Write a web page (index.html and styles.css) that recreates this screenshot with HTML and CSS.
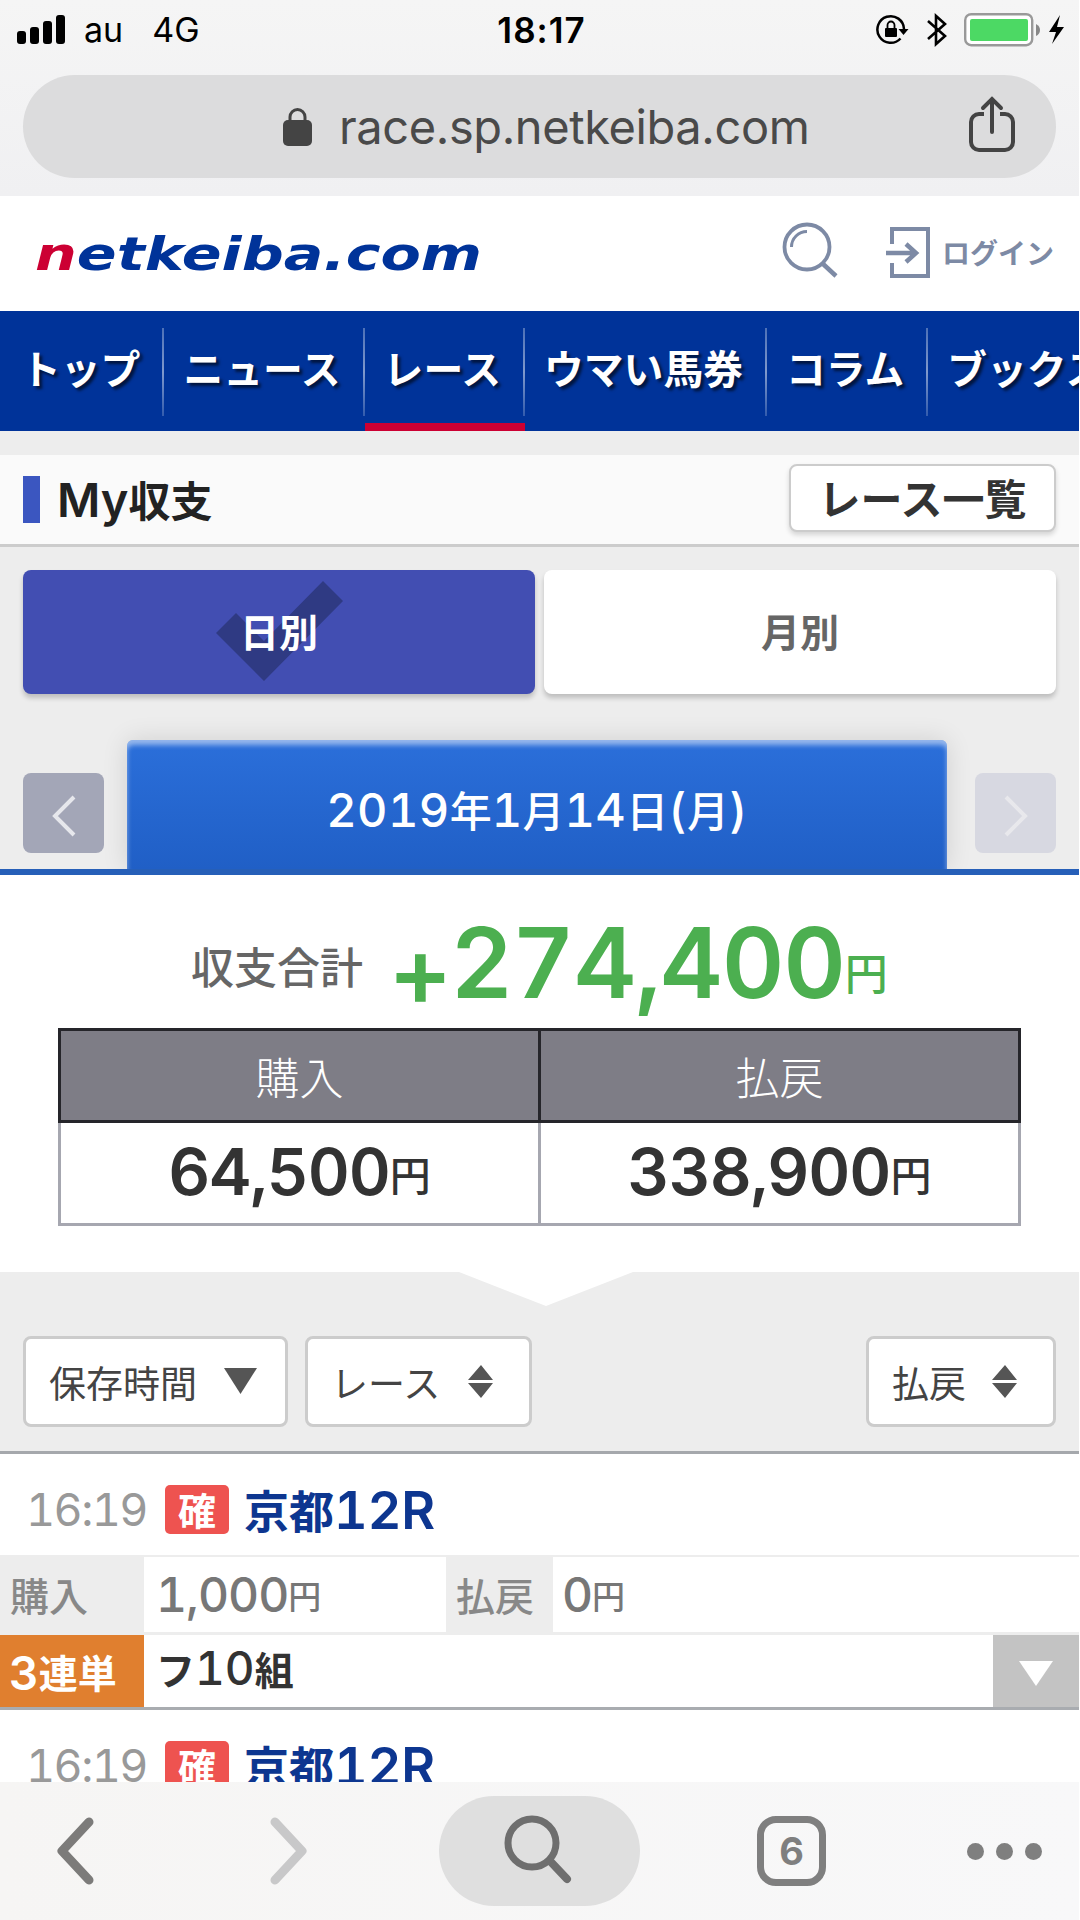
FILE: index.html
```html
<!DOCTYPE html>
<html lang="ja">
<head>
    <meta charset="UTF-8">
    <meta name="viewport" content="width=device-width, initial-scale=1.0">
    <title>My収支</title>
    <link rel="stylesheet" href="styles.css">
</head>
<body>
    <!-- Browser chrome (top) -->
    <div class="browser-top">
        <div class="status-bar">
            <div class="status-left">
                <svg class="signal" width="48" height="30" viewBox="0 0 48 30">
                    <rect x="0" y="16" width="9" height="13" rx="3"/>
                    <rect x="13" y="12" width="9" height="17" rx="3"/>
                    <rect x="26" y="6" width="9" height="23" rx="3"/>
                    <rect x="39" y="0" width="9" height="29" rx="3"/>
                </svg>
                <span class="carrier">au</span>
                <span>4G</span>
            </div>
            <div class="status-time">18:17</div>
            <div class="status-right">
                <svg width="33" height="32" viewBox="0 0 33 32">
                    <path d="M24.5 24.5A13.3 13.3 0 1 1 28 15" fill="none" stroke="#000" stroke-width="2.5"/>
                    <path d="M22.5 15h10l-5 6z"/>
                    <rect x="9" y="14" width="12" height="9" rx="1"/>
                    <path d="M11.5 14v-3a3.5 3.5 0 0 1 7 0v3" fill="none" stroke="#000" stroke-width="1.8"/>
                </svg>
                <svg class="bluetooth" width="22" height="34" viewBox="0 0 22 34">
                    <path d="M2 8l17 15-9 8V3l9 8L2 26" fill="none" stroke="#000" stroke-width="2.6"/>
                </svg>
                <svg width="102" height="34" viewBox="0 0 102 34">
                    <rect x="1.2" y="1.2" width="67" height="31" rx="6" fill="#fff" stroke="#999" stroke-width="2.4"/>
                    <rect x="6" y="6" width="58" height="22" rx="2" fill="#4cd964"/>
                    <path d="M72 11q4 2 4 6t-4 6z" fill="#888"/>
                    <path d="M96 2L85 19h7l-4 12 12-17h-7z"/>
                </svg>
            </div>
        </div>
        <div class="url-bar">
            <svg class="lock" width="29" height="38" viewBox="0 0 29 38">
                <rect x="0" y="12" width="29" height="26" rx="5" fill="#444"/>
                <path d="M7 13V9a7.5 7.5 0 0 1 15 0v4" fill="none" stroke="#444" stroke-width="3"/>
            </svg>
            <span class="url-text">race.sp.netkeiba.com</span>
            <svg class="share" width="46" height="58" viewBox="0 0 46 58" fill="none" stroke="#444" stroke-width="4">
                <path d="M15 18H10a8 8 0 0 0-8 8v20a8 8 0 0 0 8 8h26a8 8 0 0 0 8-8V26a8 8 0 0 0-8-8h-5"/>
                <path d="M23 36V3M14 12l9-9 9 9" stroke-linecap="round"/>
            </svg>
        </div>
    </div>

    <div class="page">
        <header class="site-header">
            <svg class="logo" width="460" height="60" viewBox="0 0 460 60">
                <text x="1" y="46" textLength="447" lengthAdjust="spacingAndGlyphs"><tspan class="logo-n">n</tspan>etkeiba.com</text>
            </svg>
            <div class="header-links">
                <svg class="search-icon" width="56" height="56" viewBox="0 0 56 56" fill="none" stroke="#7d8aa5" stroke-width="3.8">
                    <circle cx="25" cy="25" r="22.5"/>
                    <path d="M40 41l14 13" stroke-width="4.5"/>
                    <path d="M9.5 25A15.5 15.5 0 0 1 25 9.5" stroke-width="3"/>
                </svg>
                <svg class="login-icon" width="45" height="52" viewBox="0 0 45 52" fill="none" stroke="#7d8aa5" stroke-width="4">
                    <path d="M6 17V2h36v47H6V36"/>
                    <path d="M0 26h30M20 17l10 9-10 9" stroke-width="4.5"/>
                </svg>
                <span class="login-text">ログイン</span>
            </div>
        </header>

        <nav class="global-nav">
            <a>トップ</a>
            <a>ニュース</a>
            <a class="current">レース</a>
            <a>ウマい馬券</a>
            <a>コラム</a>
            <a>ブックス</a>
        </nav>

        <div class="title-bar">
            <h1><span class="latin">My</span>収支</h1>
            <a class="race-list-btn">レース一覧</a>
        </div>

        <div class="balance-head">
            <div class="period-tabs">
                <div class="period active">
                    <svg class="check" width="127" height="100" viewBox="0 0 127 100">
                        <path d="M107 0l20 20-79 80L0 52l20-20 28 28z" fill="#2f3a83"/>
                    </svg>
                    <span>日別</span>
                </div>
                <div class="period"><span>月別</span></div>
            </div>
            <div class="date-row">
                <div class="arrow prev">
                    <svg width="24" height="44" viewBox="0 0 24 44"><path d="M22 3L3 22l19 19" fill="none" stroke="#e6e7ec" stroke-width="4"/></svg>
                </div>
                <div class="date"><b>2019</b>年<b>1</b>月<b>14</b>日<b>(</b>月<b>)</b></div>
                <div class="arrow next">
                    <svg width="24" height="44" viewBox="0 0 24 44"><path d="M2 3l19 19L2 41" fill="none" stroke="#e8e8ec" stroke-width="4"/></svg>
                </div>
            </div>
        </div>

        <div class="summary">
            <div class="total">
                <span class="total-label">収支合計</span><span class="total-value"><span class="plus">+</span>274,400</span><span class="total-yen">円</span>
            </div>
            <table class="summary-table">
                <tr><th>購入</th><th>払戻</th></tr>
                <tr><td><b>64,500</b>円</td><td><b>338,900</b>円</td></tr>
            </table>
        </div>

        <div class="sort-area">
            <svg class="notch" width="174" height="35" viewBox="0 0 174 35"><path d="M0 0h174L87 34z" fill="#fff"/></svg>
            <div class="sort-row">
                <div class="sort-btn sort-time">保存時間
                    <svg width="34" height="27" viewBox="0 0 34 27"><path d="M0 0h33L16.5 26z" fill="#555"/></svg>
                </div>
                <div class="sort-btn sort-race">レース
                    <svg width="26" height="33" viewBox="0 0 26 33"><path d="M13 0l12 15H0zM0 18h25L13 33z" fill="#555"/></svg>
                </div>
                <div class="sort-btn sort-pay">払戻
                    <svg width="26" height="33" viewBox="0 0 26 33"><path d="M13 0l12 15H0zM0 18h25L13 33z" fill="#555"/></svg>
                </div>
            </div>
        </div>

        <!-- Race list -->
        <div class="race">
            <div class="race-title">
                <span class="time">16:19</span>
                <span class="badge">確</span>
                <span class="race-name">京都<b>12R</b></span>
            </div>
            <div class="race-money">
                <div class="label buy">購入</div>
                <div class="money buy-money"><b>1,000</b>円</div>
                <div class="label pay">払戻</div>
                <div class="money"><b>0</b>円</div>
            </div>
            <div class="race-bet">
                <div class="bet-type"><b>3</b>連単</div>
                <div class="bet-detail">フ<b>10</b>組</div>
                <div class="bet-open">
                    <svg width="34" height="25" viewBox="0 0 34 25"><path d="M0 0h34L17 25z" fill="#fff"/></svg>
                </div>
            </div>
        </div>
        <div class="race">
            <div class="race-title">
                <span class="time">16:19</span>
                <span class="badge">確</span>
                <span class="race-name">京都<b>12R</b></span>
            </div>
        </div>
    </div>

    <!-- Browser chrome (bottom) -->
    <div class="browser-bottom">
        <svg class="back" width="38" height="70" viewBox="0 0 38 70"><path d="M33 6L6 35l27 29" fill="none" stroke="#7c7b7a" stroke-width="9" stroke-linecap="round" stroke-linejoin="round"/></svg>
        <svg class="forward" width="38" height="70" viewBox="0 0 38 70"><path d="M5 6l27 29L5 64" fill="none" stroke="#c8c8c9" stroke-width="9" stroke-linecap="round" stroke-linejoin="round"/></svg>
        <div class="search-pill">
            <svg width="68" height="70" viewBox="0 0 68 70" fill="none" stroke="#6e6e6e" stroke-width="7">
                <circle cx="28" cy="28" r="24"/>
                <path d="M46 46l17 18" stroke-width="8" stroke-linecap="round"/>
            </svg>
        </div>
        <div class="tab-count">6</div>
        <div class="menu-dots"><i></i><i></i><i></i></div>
    </div>
</body>
</html>
```

FILE: styles.css
```css
* {
    box-sizing: border-box;
}
body {
    margin: 0;
    width: 1080px;
    height: 1920px;
    padding-right: 1px;
    display: flex;
    flex-direction: column;
    overflow: hidden;
    background: #fff;
    font-family: "Noto Sans CJK JP", sans-serif;
    color: #333;
}
svg {
    display: block;
    flex: none;
}
b {
    font-family: "Inter", sans-serif;
    font-variant-numeric: tabular-nums;
}

/* Browser top */
.browser-top {
    flex: none;
    height: 196px;
    background: linear-gradient(#f5f5f5, #f0f0f2);
    font-family: "Inter", sans-serif;
}
.status-bar {
    height: 75px;
    padding: 0 13px 16px 17px;
    display: grid;
    grid-template-columns: 1fr auto 1fr;
    align-items: center;
    font-size: 34px;
    color: #000;
}
.status-left, .status-right {
    display: flex;
    align-items: center;
}
.carrier {
    margin: 0 29px 0 19px;
}
.status-time {
    font-size: 35px;
    font-weight: 600;
    letter-spacing: 1px;
}
.status-right {
    justify-content: flex-end;
}
.bluetooth {
    margin: 0 16px 0 17px;
}
.url-bar {
    height: 103px;
    margin: 0 23px;
    padding: 0 41px 0 260px;
    display: flex;
    align-items: center;
    border-radius: 52px;
    background: #dcdcdd;
    color: #4a4a4a;
}
.url-text {
    margin-left: 27px;
    flex: 1;
    font-size: 47px;
    letter-spacing: -0.4px;
    white-space: nowrap;
}
.share {
    margin-top: -4px;
}

.page {
    flex: 1;
    min-height: 0;
    overflow: hidden;
}

/* Site header */
.site-header {
    height: 115px;
    padding: 0 25px 0 34px;
    display: flex;
    justify-content: space-between;
    align-items: center;
}
.logo text {
    font: italic bold 46px "DejaVu Sans", sans-serif;
    fill: #003399;
}
.logo .logo-n {
    fill: #cc0033;
}
.header-links {
    display: flex;
    align-items: center;
    color: #7d8aa5;
}
.search-icon {
    margin-bottom: 8px;
}
.login-icon {
    margin: 0 11px 2px 48px;
}
.login-text {
    margin-bottom: 4px;
    font-size: 28px;
    font-weight: bold;
}

/* Global nav */
.global-nav {
    height: 120px;
    display: flex;
    overflow: hidden;
    background: #003399;
    padding-left: 2px;
}
.global-nav a {
    flex: none;
    padding: 0 24px 0 19px;
    line-height: 112px;
    font-size: 39.8px;
    font-weight: bold;
    color: #fff;
    text-shadow: 3px 3px 3px rgba(0, 0, 0, 0.6);
    white-space: nowrap;
    background: linear-gradient(rgba(255, 255, 255, 0.3), rgba(255, 255, 255, 0.5), rgba(255, 255, 255, 0.2)) no-repeat right 17px / 2px 88px;
    background-position: right 0 top 17px;
    border-bottom: 8px solid transparent;
}
.global-nav a.current {
    border-bottom-color: #cc0033;
}

/* Title bar */
.title-bar {
    height: 116px;
    padding: 0 23px;
    border-top: 24px solid #ededed;
    border-bottom: 3px solid #ccc;
    background: #fafafa;
    display: flex;
    justify-content: space-between;
    align-items: center;
}
.title-bar h1 {
    margin: 0;
    padding-left: 17px;
    border-left: 17px solid #3b56c0;
    line-height: 43px;
    font-size: 42px;
    font-weight: 600;
    color: #222;
}
.latin {
    font-family: "Inter", sans-serif;
    font-weight: 600;
    font-size: 47px;
    line-height: 1;
}
.race-list-btn {
    width: 267px;
    height: 68px;
    margin-bottom: 4px;
    line-height: 62px;
    border: 2px solid #ccc;
    border-radius: 8px;
    background: #fff;
    box-shadow: 0 3px 5px rgba(0, 0, 0, 0.15);
    text-align: center;
    font-size: 42px;
    font-weight: bold;
}

/* Day / month tabs and date */
.balance-head {
    height: 328px;
    background: #ededed;
    padding-top: 23px;
    border-bottom: 6px solid #265fb8;
}
.period-tabs {
    display: flex;
    gap: 9px;
    padding: 0 23px;
}
.period {
    position: relative;
    flex: 1;
    height: 124px;
    line-height: 120px;
    border-radius: 8px;
    background: #fff;
    box-shadow: 0 4px 5px rgba(0, 0, 0, 0.2);
    text-align: center;
    font-size: 39px;
    font-weight: bold;
    color: #666;
}
.period.active {
    background: #424eb2;
    color: #fff;
}
.period span {
    position: relative;
}
.check {
    position: absolute;
    left: 193px;
    top: 11px;
}
.date-row {
    margin-top: 46px;
    height: 129px;
    padding: 0 23px;
    display: flex;
}
.arrow {
    width: 81px;
    height: 80px;
    margin-top: 33px;
    border-radius: 8px;
    display: flex;
    align-items: center;
    justify-content: center;
    padding-top: 6px;
}
.prev {
    background: #a3a6b7;
}
.next {
    margin-left: auto;
    background: #d7d8e1;
}
.date {
    width: 820px;
    height: 129px;
    margin-left: 23px;
    line-height: 138px;
    border-radius: 6px 6px 0 0;
    background: linear-gradient(#2b6fda, #205fc6);
    box-shadow: inset 0 5px 5px rgba(255, 255, 255, 0.5), 0 0 26px rgba(0, 0, 0, 0.12);
    clip-path: inset(-40px -40px 0 -40px);
    text-align: center;
    color: #fff;
    font-size: 42px;
    font-weight: 500;
}
.date b {
    font-size: 47px;
    font-weight: 500;
    line-height: 1;
    letter-spacing: 0.4px;
}

/* Summary */
.summary {
    height: 397px;
    padding: 0 58px;
}
.total {
    height: 153px;
    padding-left: 133px;
    line-height: 162px;
    font-size: 97px;
    white-space: nowrap;
}
.total span {
    line-height: 1;
}
.total-label {
    display: inline-block;
    width: 198px;
    font-size: 43px;
    font-weight: 500;
    color: #666;
    vertical-align: 14px;
}
.total-value {
    font-family: "Inter", sans-serif;
    font-variant-numeric: tabular-nums;
    font-weight: 600;
    letter-spacing: -1.2px;
    color: #4caf50;
}
.plus {
    vertical-align: -8px;
}
.total-yen {
    font-size: 43px;
    font-weight: 500;
    color: #4caf50;
    vertical-align: 8px;
}
.summary-table {
    width: 963px;
    border-collapse: collapse;
    table-layout: fixed;
}
.summary-table th {
    height: 92px;
    padding: 0;
    border: 3px solid #25252a;
    background: #7e7d86;
    color: #fff;
    font-size: 44px;
    font-weight: 300;
    line-height: 80px;
}
.summary-table td {
    height: 103px;
    padding: 0;
    border: 3px solid #a6a7b0;
    text-align: center;
    line-height: 96px;
    font-size: 41px;
    font-weight: 500;
}
.summary-table td b {
    font-size: 65px;
    font-weight: 600;
    line-height: 1;
    letter-spacing: -1px;
    vertical-align: -4px;
}

/* Sort buttons */
.sort-area {
    position: relative;
    height: 182px;
    padding: 64px 23px 0;
    background: #ededed;
    border-bottom: 3px solid #a5a8ac;
}
.notch {
    position: absolute;
    left: 459px;
    top: 0;
}
.sort-row {
    display: flex;
}
.sort-btn {
    height: 91px;
    display: flex;
    justify-content: space-between;
    align-items: center;
    border: 3px solid #ccc;
    border-radius: 8px;
    background: #fff;
    font-size: 37px;
    font-weight: 400;
    line-height: 80px;
    color: #444;
}
.sort-time {
    width: 265px;
    padding: 0 27px 0 23px;
}
.sort-race {
    width: 227px;
    margin-left: 17px;
    padding: 0 35px 0 23px;
}
.sort-pay {
    width: 190px;
    margin-left: auto;
    padding: 0 35px 0 23px;
}

/* Race list */
.race-title {
    height: 101px;
    padding: 10px 0 0 26px;
    display: flex;
    align-items: center;
}
.time {
    width: 139px;
    font-family: "Inter", sans-serif;
    font-variant-numeric: tabular-nums;
    font-size: 45px;
    letter-spacing: -1.6px;
    color: #999;
}
.badge {
    width: 64px;
    height: 49px;
    line-height: 47px;
    border-radius: 5px;
    background: #ee5350;
    color: #fff;
    text-align: center;
    font-size: 38px;
    font-weight: bold;
}
.race-name {
    margin-left: 15px;
    line-height: 78px;
    font-size: 45px;
    font-weight: bold;
    color: #0d3690;
}
.race-name b {
    font-size: 52px;
    font-weight: 600;
    line-height: 1;
}
.race-money {
    height: 80px;
    display: flex;
    border-top: 2px solid #ededed;
    border-bottom: 3px solid #ededed;
    line-height: 75px;
    font-size: 39px;
    color: #888;
}
.label {
    padding-left: 10px;
    background: #ededed;
    font-weight: 500;
}
.buy, .bet-type {
    width: 144px;
}
.pay {
    width: 107px;
}
.money {
    padding-left: 9px;
    font-size: 33px;
    font-weight: 500;
    line-height: 77px;
    color: #777;
}
.buy-money {
    width: 302px;
    padding-left: 12px;
}
.money b {
    font-size: 48px;
    font-weight: 500;
    line-height: 1;
    letter-spacing: -1px;
    vertical-align: -3px;
}
.race-bet {
    height: 75px;
    display: flex;
    border-bottom: 3px solid #a9acb0;
    line-height: 72px;
    font-size: 39px;
    font-weight: bold;
}
.race-bet b {
    font-size: 46px;
    font-weight: 500;
    line-height: 1;
}
.race-bet .bet-type b {
    font-weight: 600;
    vertical-align: -2px;
}
.bet-type {
    padding-left: 9px;
    background: #e07f2f;
    color: #fff;
}
.bet-detail {
    flex: 1;
    padding-left: 12px;
    line-height: 66px;
}
.bet-open {
    width: 86px;
    display: flex;
    align-items: center;
    justify-content: center;
    padding-top: 5px;
    background: #c3c3c3;
}

/* Browser bottom */
.browser-bottom {
    flex: none;
    height: 138px;
    padding: 0 37px 0 56px;
    display: flex;
    align-items: center;
    background: linear-gradient(to right, #f6f5f4, #f8f8f9);
}
.forward {
    margin-left: 176px;
}
.search-pill {
    width: 201px;
    height: 110px;
    margin-left: 131px;
    padding: 0 0 2px 65px;
    display: flex;
    align-items: center;
    border-radius: 55px;
    background: #dfdfdf;
}
.tab-count {
    width: 69px;
    height: 70px;
    margin-left: 117px;
    border: 7px solid #7f7f7f;
    border-radius: 19px;
    line-height: 56px;
    text-align: center;
    font-family: "Inter", sans-serif;
    font-size: 38px;
    font-weight: 700;
    color: #7f7f7f;
}
.menu-dots {
    margin-left: auto;
    display: flex;
    gap: 12px;
}
.menu-dots i {
    width: 17px;
    height: 17px;
    border-radius: 50%;
    background: #7f7f7f;
}
```
